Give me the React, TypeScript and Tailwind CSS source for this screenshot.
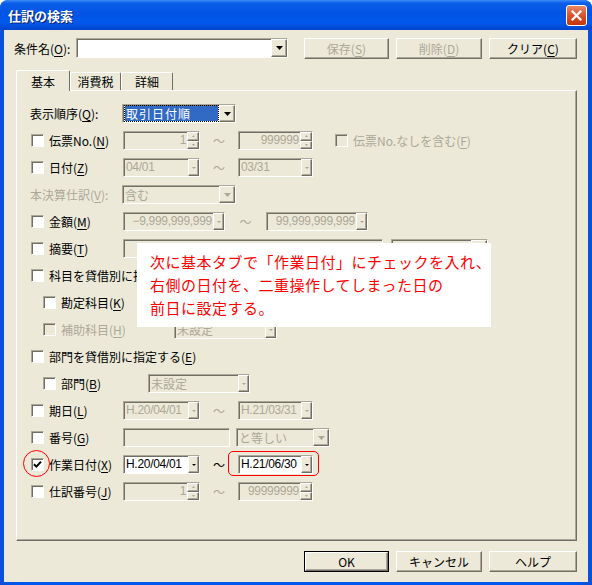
import React from "react";

const font = "font-['Noto_Sans_CJK_JP','Noto_Sans_CJK_SC',sans-serif]";
const latin = "font-['Liberation_Sans','Noto_Sans_CJK_JP',sans-serif] text-[12px] tracking-[-0.3px]";
const raised =
  "border border-t-white border-l-white border-r-[#716f64] border-b-[#716f64] shadow-[inset_-1px_-1px_0_#aca899]";
const sunken =
  "border border-t-[#aca899] border-l-[#aca899] border-r-white border-b-white shadow-[inset_1px_1px_0_#716f64]";
const dim = "text-[#aca899]";

// mnemonic letter, e.g. (O)
function M({ c }: { c: string }) {
  return (
    <>
      (<u className="underline-offset-2">{c}</u>)
    </>
  );
}

function Tri({ w, h, c, up }: { w: number; h: number; c: string; up?: boolean }) {
  return (
    <svg width={w} height={h} viewBox={`0 0 ${w} ${h}`}>
      <path d={up ? `M0 ${h} L${w / 2} 0 L${w} ${h} Z` : `M0 0 L${w} 0 L${w / 2} ${h} Z`} fill={c} />
    </svg>
  );
}

function Check({ on, off }: { on?: boolean; off?: boolean }) {
  return (
    <span
      className={`flex h-[13px] w-[13px] shrink-0 items-center justify-center ${sunken} ${
        off ? "bg-[#ece9d8]" : "bg-white"
      }`}
    >
      {on && (
        <svg width="9" height="9" viewBox="0 0 9 9">
          <path d="M1 4.2 L3.4 6.6 L8 1.6" stroke="#000" strokeWidth="2" fill="none" />
        </svg>
      )}
    </span>
  );
}

type FieldProps = {
  w: string;
  text?: string;
  off?: boolean;
  kind?: "drop" | "mini" | "spin" | "none";
  right?: boolean;
  sel?: boolean;
};

function Field({ w, text = "", off, kind = "none", right, sel }: FieldProps) {
  const arrow = off ? "#aca899" : "#000";
  const num = /^[H\d.,/−]+$/.test(text);
  return (
    <div
      className={`flex h-[19px] shrink-0 ${w} ${sunken} ${
        off ? "bg-[#ece9d8] text-[#aca899]" : "bg-white text-black"
      }`}
    >
      <div
        className={`flex min-w-0 flex-1 items-center overflow-hidden whitespace-nowrap pl-[2px] pr-px ${
          right ? "justify-end" : ""
        } ${num ? latin : ""}`}
      >
        {sel ? (
          <span className="flex h-[15px] flex-1 items-center bg-[#316ac5] px-px tracking-[1px] text-white outline-1 outline-dotted outline-[#000]">
            {text}
          </span>
        ) : (
          text
        )}
      </div>
      {kind === "drop" && (
        <div className={`flex w-[16px] items-center justify-center bg-[#ece9d8] ${raised}`}>
          <Tri w={7} h={4} c={arrow} />
        </div>
      )}
      {kind === "mini" && (
        <div className={`flex w-[11px] items-center justify-center bg-[#ece9d8] ${raised}`}>
          <Tri w={4} h={2} c={arrow} />
        </div>
      )}
      {kind === "spin" && (
        <div className="flex w-[12px] flex-col">
          <div className={`flex flex-1 items-center justify-center bg-[#ece9d8] ${raised}`}>
            <Tri w={3} h={2} c={arrow} up />
          </div>
          <div className={`flex flex-1 items-center justify-center bg-[#ece9d8] ${raised}`}>
            <Tri w={3} h={2} c={arrow} />
          </div>
        </div>
      )}
    </div>
  );
}

function Row({ children, className = "" }: { children: React.ReactNode; className?: string }) {
  return <div className={`flex h-[27px] shrink-0 items-center ${className}`}>{children}</div>;
}

function CL({ children, w, on, off }: { children: React.ReactNode; w: string; on?: boolean; off?: boolean }) {
  return (
    <div className={`flex shrink-0 items-center gap-[5px] whitespace-nowrap ${w}`}>
      <Check on={on} off={off} />
      <span className={off ? dim : ""}>{children}</span>
    </div>
  );
}

function Tilde({ w = "w-[38px]", off = true }: { w?: string; off?: boolean }) {
  return <span className={`shrink-0 text-center ${w} ${off ? dim : ""}`}>～</span>;
}

function Btn({ children, w, off, def }: { children: React.ReactNode; w: string; off?: boolean; def?: boolean }) {
  return (
    <div className={`h-[21px] shrink-0 ${w} ${def ? "border border-black" : ""}`}>
      <div
        className={`flex h-full w-full items-center justify-center bg-[#ece9d8] ${raised} ${off ? dim : ""}`}
      >
        {children}
      </div>
    </div>
  );
}

export default function App() {
  return (
    <div className={`relative h-[585px] w-[592px] overflow-hidden bg-white ${font} text-[12px] leading-[15px] text-black`}>
      <div className="flex h-full flex-col rounded-t-[8px] bg-[linear-gradient(90deg,#0a4fd8,#0058ee_3%,#0058ee_97%,#0a4fd8)]">
        {/* title bar */}
        <div className="flex h-[30px] shrink-0 items-center justify-between rounded-t-[8px] bg-[linear-gradient(180deg,#3d8cf8_0%,#0b5ee9_10%,#0054e3_45%,#0058ec_75%,#0046cc_100%)] pl-[8px] pr-[5px]">
          <span className="text-[13px] font-bold text-white [text-shadow:1px_1px_0_#0a1f6e]">仕訳の検索</span>
          <div className="flex h-[21px] w-[21px] items-center justify-center rounded-[3px] border border-white bg-[linear-gradient(180deg,#e8876a,#d9532f_50%,#c4360e)]">
            <svg width="11" height="11" viewBox="0 0 11 11">
              <path d="M1.5 1.5 L9.5 9.5 M9.5 1.5 L1.5 9.5" stroke="#fff" strokeWidth="2.2" strokeLinecap="square" />
            </svg>
          </div>
        </div>

        {/* body */}
        <div className="mx-[4px] mb-[3px] flex flex-1 flex-col bg-[#ece9d8] pl-[12px] pr-[11px] pt-[8px]">
          <div className="-ml-[2px] flex h-[20px] items-center">
            <span className="w-[62px] shrink-0 whitespace-nowrap">
              条件名<M c="O" />:
            </span>
            <div className={`flex h-[20px] w-[212px] shrink-0 bg-white ${sunken}`}>
              <div className="flex-1" />
              <div className={`flex w-[16px] items-center justify-center bg-[#ece9d8] ${raised}`}>
                <Tri w={7} h={4} c="#000" />
              </div>
            </div>
            <div className="ml-[16px] flex gap-[7px]">
              <Btn w="w-[85px]" off>
                保存<M c="S" />
              </Btn>
              <Btn w="w-[86px]" off>
                削除<M c="D" />
              </Btn>
              <Btn w="w-[88px]">
                クリア<M c="C" />
              </Btn>
            </div>
          </div>

          {/* tabs */}
          <div className="relative z-10 mt-[12px] flex h-[20px] items-end">
            <div className="-mb-px flex h-[21px] w-[54px] items-center justify-center rounded-t-[2px] border-l border-t border-r border-l-white border-t-white border-r-[#716f64] bg-[#ece9d8]">
              基本
            </div>
            <div className="flex h-[18px] w-[51px] items-center justify-center rounded-t-[2px] border-l border-t border-r border-l-white border-t-white border-r-[#716f64] bg-[#ece9d8]">
              消費税
            </div>
            <div className="flex h-[18px] w-[52px] items-center justify-center rounded-t-[2px] border-l border-t border-r border-l-white border-t-white border-r-[#716f64] bg-[#ece9d8]">
              詳細
            </div>
          </div>

          {/* tab panel */}
          <div className="flex h-[451px] flex-col border border-t-white border-l-white border-r-[#716f64] border-b-[#716f64] pl-[14px] pt-[9px] shadow-[inset_-1px_-1px_0_#aca899]">
            <Row>
              <span className="-ml-px w-[92px] shrink-0 whitespace-nowrap">
                表示順序<M c="Q" />:
              </span>
              <Field w="w-[114px]" text="取引日付順" kind="drop" sel />
            </Row>
            <Row>
              <CL w="w-[92px]">
                伝票No.<M c="N" />
              </CL>
              <Field w="w-[77px]" text="1" off kind="spin" right />
              <Tilde />
              <Field w="w-[75px]" text="999999" off kind="spin" right />
              <div className="ml-[22px]">
                <CL w="w-auto" off>
                  伝票No.なしを含む<M c="F" />
                </CL>
              </div>
            </Row>
            <Row>
              <CL w="w-[92px]">
                日付<M c="Z" />
              </CL>
              <Field w="w-[77px]" text="04/01" off kind="mini" />
              <Tilde />
              <Field w="w-[75px]" text="03/31" off kind="mini" />
            </Row>
            <Row>
              <span className={`-ml-px w-[92px] shrink-0 whitespace-nowrap ${dim}`}>
                本決算仕訳<M c="V" />:
              </span>
              <Field w="w-[114px]" text="含む" off kind="drop" />
            </Row>
            <Row>
              <CL w="w-[92px]">
                金額<M c="M" />
              </CL>
              <Field w="w-[102px]" text="−9,999,999,999" off kind="mini" right />
              <Tilde w="w-[41px]" />
              <Field w="w-[102px]" text="99,999,999,999" off kind="mini" right />
            </Row>
            <Row>
              <CL w="w-[92px]">
                摘要<M c="T" />
              </CL>
              <Field w="w-[260px]" off />
              <div className="ml-[8px]">
                <Field w="w-[97px]" off kind="drop" />
              </div>
            </Row>
            <Row>
              <CL w="w-auto">
                科目を貸借別に指定する<M c="A" />
              </CL>
            </Row>
            <Row className="pl-[12px]">
              <CL w="w-[131px]">
                勘定科目<M c="K" />
              </CL>
            </Row>
            <Row className="pl-[12px]">
              <CL w="w-[131px]" off>
                補助科目<M c="H" />
              </CL>
              <Field w="w-[103px]" text="未設定" off kind="mini" />
            </Row>
            <Row>
              <CL w="w-auto">
                部門を貸借別に指定する<M c="E" />
              </CL>
            </Row>
            <Row className="pl-[12px]">
              <CL w="w-[105px]">
                部門<M c="B" />
              </CL>
              <Field w="w-[102px]" text="未設定" off kind="mini" />
            </Row>
            <Row>
              <CL w="w-[92px]">
                期日<M c="L" />
              </CL>
              <Field w="w-[77px]" text="H.20/04/01" off kind="mini" />
              <Tilde />
              <Field w="w-[75px]" text="H.21/03/31" off kind="mini" />
            </Row>
            <Row>
              <CL w="w-[92px]">
                番号<M c="G" />
              </CL>
              <Field w="w-[107px]" off />
              <div className="ml-[6px]">
                <Field w="w-[94px]" text="と等しい" off kind="drop" />
              </div>
            </Row>
            <Row>
              <CL w="w-[92px]" on>
                作業日付<M c="X" />
              </CL>
              <Field w="w-[77px]" text="H.20/04/01" kind="mini" />
              <Tilde off={false} />
              <Field w="w-[75px]" text="H.21/06/30" kind="mini" />
            </Row>
            <Row>
              <CL w="w-[92px]">
                仕訳番号<M c="J" />
              </CL>
              <Field w="w-[77px]" text="1" off kind="spin" right />
              <Tilde />
              <Field w="w-[75px]" text="99999999" off kind="spin" right />
            </Row>
          </div>

          {/* bottom buttons */}
          <div className="mt-[10px] flex justify-end gap-[7px]">
            <Btn w="w-[85px]" def>
              OK
            </Btn>
            <Btn w="w-[86px]">キャンセル</Btn>
            <Btn w="w-[88px]">ヘルプ</Btn>
          </div>
        </div>
      </div>

      {/* annotation overlays */}
      <div className="absolute left-[137px] top-[243px] h-[84px] w-[354px] bg-white pl-[13px] pt-[7px] text-[15px] leading-[23px] tracking-[0.5px] text-[#ff0000]">
        <div className="whitespace-nowrap">次に基本タブで「作業日付」にチェックを入れ、</div>
        <div className="whitespace-nowrap">右側の日付を、二重操作してしまった日の</div>
        <div className="whitespace-nowrap">前日に設定する。</div>
      </div>
      <div className="absolute left-[23px] top-[450px] h-[27px] w-[27px] rounded-full border border-[#ff0000]" />
      <div className="absolute left-[228px] top-[451px] h-[25px] w-[91px] rounded-[5px] border border-[#ff0000]" />
    </div>
  );
}
